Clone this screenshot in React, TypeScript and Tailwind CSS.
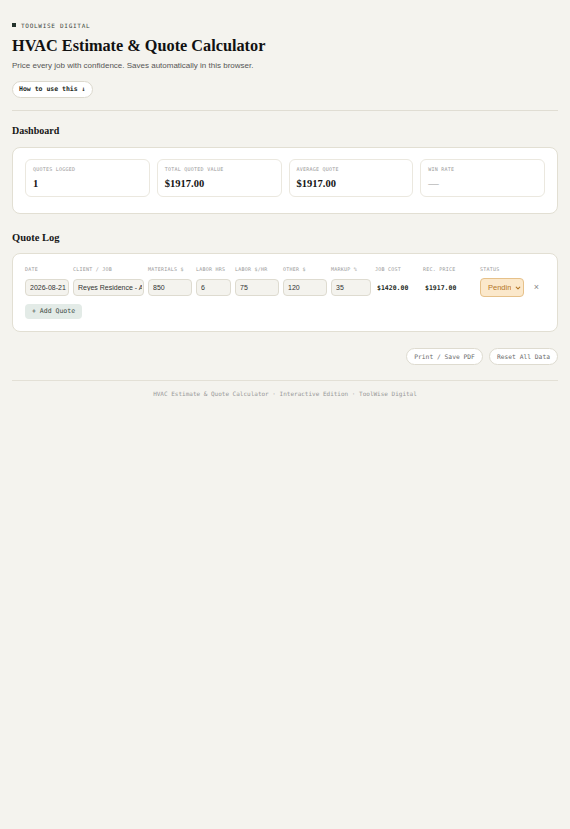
import { useState } from 'react'

const mono = "font-['DejaVu_Sans_Mono','Liberation_Mono',monospace]"
const serif = "font-['Liberation_Serif','Times_New_Roman',serif]"
const sans = "font-['Liberation_Sans',Arial,sans-serif]"

const stats = [
  { label: 'Quotes Logged', value: '1' },
  { label: 'Total Quoted Value', value: '$1917.00' },
  { label: 'Average Quote', value: '$1917.00' },
  { label: 'Win Rate', value: '—', muted: true },
]

const headers = [
  'Date',
  'Client / Job',
  'Materials $',
  'Labor Hrs',
  'Labor $/hr',
  'Other $',
  'Markup %',
  'Job Cost',
  'Rec. Price',
  'Status',
  '',
]

export default function App() {
  const [row, setRow] = useState({
    date: '2026-08-21',
    client: 'Reyes Residence - AC Replacement',
    materials: '850',
    hours: '6',
    rate: '75',
    other: '120',
    markup: '35',
    status: 'Pending',
  })

  const cost =
    Number(row.materials) + Number(row.hours) * Number(row.rate) + Number(row.other)
  const price = cost * (1 + Number(row.markup) / 100)

  const inputCls = `h-[17px] w-full min-w-0 rounded-[4px] border border-[#dedbd0] bg-[#f4f3ee] pl-[4px] pr-[1px] text-[7px] text-[#333] outline-none ${sans}`

  return (
    <div className="min-h-screen bg-[#f4f3ee] px-3 pt-5 pb-10 text-[#161616]">
      {/* header */}
      <div className={`flex h-[10px] items-center gap-[5px] text-[6px] uppercase tracking-[0.12em] text-[#3d4742] ${mono}`}>
        <span className="block h-[4px] w-[4px] bg-[#24332c]" />
        <span>ToolWise Digital</span>
      </div>
      <h1 className={`mt-[6px] text-[16.25px] font-bold leading-[20px] text-[#111] ${serif}`}>
        HVAC Estimate &amp; Quote Calculator
      </h1>
      <p className={`mt-[4px] text-[8px] leading-[12px] text-[#555] ${sans}`}>
        Price every job with confidence. Saves automatically in this browser.
      </p>
      <button
        className={`mt-[9px] flex h-[17px] items-center rounded-full border border-[#dcd9ce] bg-white px-[6px] text-[6.5px] font-bold text-[#1d2a24] ${mono}`}
      >
        How to use this ↓
      </button>

      <div className="mt-[12px] border-t border-[#e0ddd3]" />

      {/* dashboard */}
      <h2 className={`mt-[13px] text-[10px] font-bold leading-[14px] ${serif}`}>Dashboard</h2>
      <div className="mt-[9px] rounded-[8px] border border-[#e2dfd3] bg-white px-3 pt-[11px] pb-[16px]">
        <div className="grid grid-cols-4 gap-[7px]">
          {stats.map((s) => (
            <div
              key={s.label}
              className="h-[38px] rounded-[6px] border border-[#ebe8df] px-[7px] pt-[6px]"
            >
              <div className={`text-[5px] uppercase leading-[6px] tracking-[0.05em] text-[#9a9a9a] ${mono}`}>
                {s.label}
              </div>
              <div
                className={`mt-[5px] text-[10.5px] font-bold leading-[14px] ${serif} ${
                  s.muted ? 'font-normal text-[#9a9a9a]' : 'text-[#141414]'
                }`}
              >
                {s.value}
              </div>
            </div>
          ))}
        </div>
      </div>

      {/* quote log */}
      <h2 className={`mt-[17px] text-[10.5px] font-bold leading-[14px] ${serif}`}>Quote Log</h2>
      <div className="mt-[8px] rounded-[8px] border border-[#e2dfd3] bg-white px-3 pt-[11px] pb-[12px]">
        <div className="grid grid-cols-[44px_71px_44px_35px_44px_44px_40px_44px_53px_44px_1fr] items-center gap-x-[4px] gap-y-[5px]">
          {headers.map((h, i) => (
            <div
              key={i}
              className={`h-[8px] text-[5px] uppercase leading-[8px] tracking-[0.05em] text-[#9a9a9a] ${mono}`}
            >
              {h}
            </div>
          ))}

          <input
            className={inputCls}
            value={row.date}
            onChange={(e) => setRow({ ...row, date: e.target.value })}
          />
          <input
            className={inputCls}
            value={row.client}
            onChange={(e) => setRow({ ...row, client: e.target.value })}
          />
          <input
            className={inputCls}
            value={row.materials}
            onChange={(e) => setRow({ ...row, materials: e.target.value })}
          />
          <input
            className={inputCls}
            value={row.hours}
            onChange={(e) => setRow({ ...row, hours: e.target.value })}
          />
          <input
            className={inputCls}
            value={row.rate}
            onChange={(e) => setRow({ ...row, rate: e.target.value })}
          />
          <input
            className={inputCls}
            value={row.other}
            onChange={(e) => setRow({ ...row, other: e.target.value })}
          />
          <input
            className={inputCls}
            value={row.markup}
            onChange={(e) => setRow({ ...row, markup: e.target.value })}
          />
          <div className={`pl-[2px] text-[6.5px] font-bold leading-[10px] text-[#1d2a24] ${mono}`}>
            ${cost.toFixed(2)}
          </div>
          <div className={`pl-[2px] text-[6.5px] font-bold leading-[10px] text-[#1d2a24] ${mono}`}>
            ${price.toFixed(2)}
          </div>
          <div className="relative h-[19px]">
            <select
              value={row.status}
              onChange={(e) => setRow({ ...row, status: e.target.value })}
              className={`block h-[19px] w-full appearance-none rounded-[4px] border border-[#e6c18a] bg-[#fbe8cb] pl-[7px] pr-[12px] text-[7.5px] font-medium text-[#b37628] outline-none ${sans}`}
            >
              <option>Pending</option>
              <option>Won</option>
              <option>Lost</option>
            </select>
            <span className="pointer-events-none absolute inset-y-0 right-[3px] flex items-center">
              <svg
                className="block h-[6px] w-[6px] text-[#b37628]"
                viewBox="0 0 10 10"
                fill="none"
                stroke="currentColor"
                strokeWidth={1.8}
                strokeLinecap="round"
                strokeLinejoin="round"
              >
                <path d="M2 3.5l3 3 3-3" />
              </svg>
            </span>
          </div>
          <div className="flex justify-center">
            <span className={`text-[9px] leading-none text-[#888] ${sans}`}>×</span>
          </div>
        </div>

        <button
          className={`mt-[7px] flex h-[15px] items-center rounded-[4px] bg-[#e3ebe7] px-[7px] text-[6.5px] text-[#3b4a43] ${mono}`}
        >
          + Add Quote
        </button>
      </div>

      {/* actions */}
      <div className="mt-[16px] flex justify-end gap-[6px]">
        <button
          className={`flex h-[17px] items-center rounded-full border border-[#dedbd0] bg-white px-[7px] text-[6.3px] text-[#6b6b6b] ${mono}`}
        >
          Print / Save PDF
        </button>
        <button
          className={`flex h-[17px] items-center rounded-full border border-[#dedbd0] bg-white px-[7px] text-[6.3px] text-[#6b6b6b] ${mono}`}
        >
          Reset All Data
        </button>
      </div>

      <div className="mt-[15px] border-t border-[#e3e0d6]" />
      <p className={`pt-[9px] text-center text-[6px] leading-[8px] text-[#999] ${mono}`}>
        HVAC Estimate &amp; Quote Calculator · Interactive Edition · ToolWise Digital
      </p>
    </div>
  )
}
